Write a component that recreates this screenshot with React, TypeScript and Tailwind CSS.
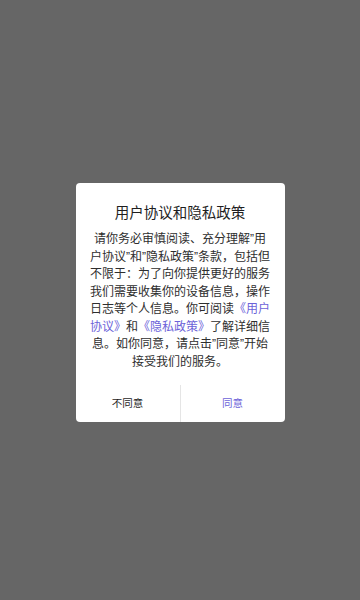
import React from 'react'

// narrow curly quote, as drawn in the reference
const Q = () => <span className="font-['Liberation_Sans'] leading-none">”</span>

const link = 'text-[#6c62d9]'

const bodyLines: React.ReactNode[] = [
  <>请你务必审慎阅读、充分理解<Q />用</>,
  <>户协议<Q />和<Q />隐私政策<Q />条款，包括但</>,
  '不限于：为了向你提供更好的服务',
  '我们需要收集你的设备信息，操作',
  <>
    日志等个人信息。你可阅读<span className={link}>《用户</span>
  </>,
  <>
    <span className={link}>协议》</span>和<span className={link}>《隐私政策》</span>了解详细信
  </>,
  <>息。如你同意，请点击<Q />同意<Q />开始</>,
  '接受我们的服务。',
]

export default function App() {
  return (
    <div
      className="w-[360px] h-[600px] bg-[#666666] flex items-start justify-center"
      style={{ fontFamily: '"Noto Sans CJK SC", "Noto Sans", sans-serif' }}
    >
      <div className="mt-[183px] w-[209px] h-[239px] bg-white rounded-[4px] flex flex-col overflow-hidden">
        {/* Title */}
        <div className="pt-[19px] h-[39px] text-center text-[14.5px] leading-[20px] text-[#1e1e1e]">
          用户协议和隐私政策
        </div>

        {/* Body */}
        <div className="mt-[7px] px-2 text-center text-[12px] leading-[17.5px] text-[#2e2e2e]">
          {bodyLines.map((line, i) => (
            <div key={i} className="h-[17.5px] whitespace-nowrap">
              {line}
            </div>
          ))}
        </div>

        {/* Buttons */}
        <div className="mt-auto flex h-[37px] text-[10.5px] leading-none">
          <button className="flex-1 flex items-center justify-center text-[#1e1e1e]">
            不同意
          </button>
          <div className="w-px bg-[#e5e5e5]" />
          <button className="flex-1 flex items-center justify-center text-[#6c62d9]">
            同意
          </button>
        </div>
      </div>
    </div>
  )
}
